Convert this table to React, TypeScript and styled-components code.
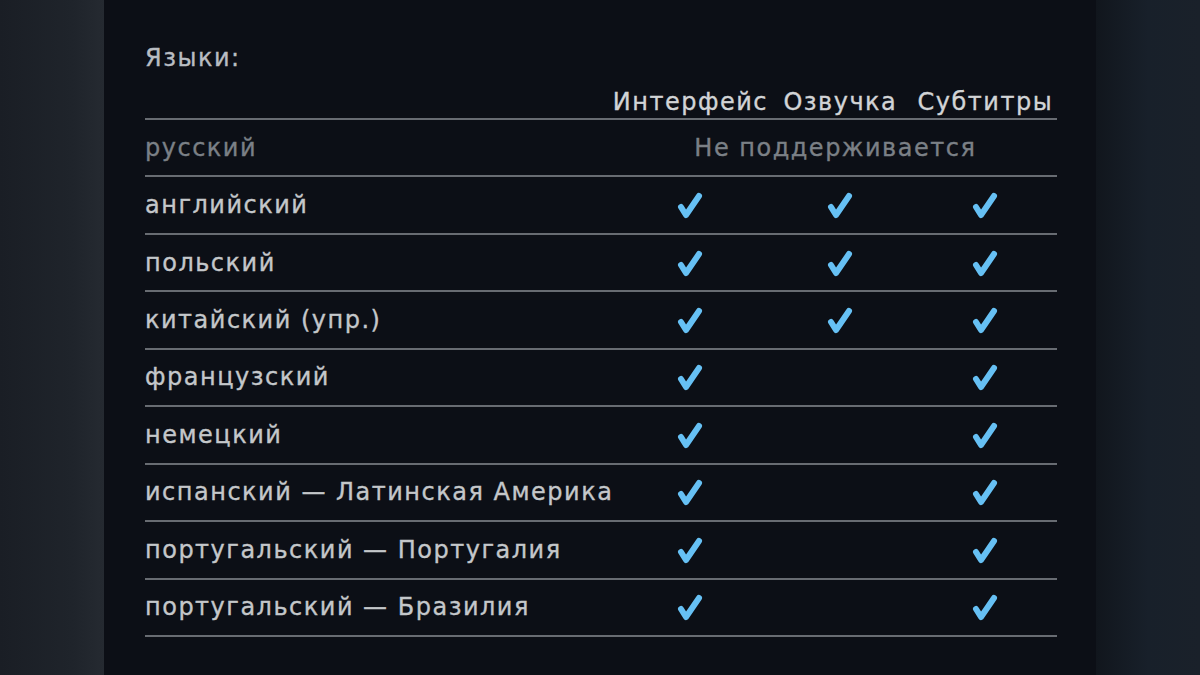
import { createGlobalStyle } from 'styled-components';
import styled from 'styled-components';

const GlobalStyle = createGlobalStyle`
  html, body {
    margin: 0;
    padding: 0;
    background: #0c0f16;
  }
  body {
    font-family: 'DejaVu Sans', 'Liberation Sans', Arial, sans-serif;
    letter-spacing: 1.5px;
    -webkit-text-stroke: 0.35px currentColor;
  }
`;

const Page = styled.div`
  display: flex;
  width: 1200px;
  height: 675px;
  overflow: hidden;
`;

const Side = styled.div<{ $right?: boolean }>`
  width: 104px;
  flex-shrink: 0;
  background: ${(p) =>
    p.$right
      ? 'linear-gradient(90deg, #11161d 0%, #18202a 50%, #1a212a 100%)'
      : 'linear-gradient(90deg, #1a1e25 0%, #1f242b 70%, #252a31 100%)'};
`;

const Panel = styled.div`
  flex: 1;
  background: #0c0f16;
  padding: 40px 39px 0 41px;
`;

const Title = styled.div`
  color: #b9bdc2;
  font-size: 24px;
  line-height: 36px;
  height: 36px;
`;

const Grid = styled.div`
  display: grid;
  grid-template-columns: 1fr 154px 146px 144px;
  margin-top: 6px;
`;

const Head = styled.div`
  height: 36px;
  line-height: 40px;
  border-bottom: 2px solid #686c72;
  color: #d2d4d6;
  font-size: 24px;
  text-align: center;
  white-space: nowrap;
  display: flex;
  justify-content: center;
`;

const Cell = styled.div<{ $span?: number; $muted?: boolean; $left?: boolean }>`
  grid-column: span ${(p) => p.$span ?? 1};
  height: 57.44px;
  box-sizing: border-box;
  border-bottom: 2px solid #686c72;
  display: flex;
  align-items: center;
  justify-content: ${(p) => (p.$left ? 'flex-start' : 'center')};
  color: ${(p) => (p.$muted ? '#7b8086' : '#c4c7ca')};
  font-size: 24px;
  white-space: nowrap;
`;

const Check = () => (
  <svg width="26" height="28" viewBox="0 0 26 28" style={{ marginTop: 2 }}>
    <path
      d="M4 15 L9 23 L22 4"
      fill="none"
      stroke="#66c0f4"
      strokeWidth="6"
      strokeLinecap="round"
      strokeLinejoin="round"
    />
  </svg>
);

type Lang = { name: string; ui: boolean; voice: boolean; subs: boolean };

const langs: Lang[] = [
  { name: 'английский', ui: true, voice: true, subs: true },
  { name: 'польский', ui: true, voice: true, subs: true },
  { name: 'китайский (упр.)', ui: true, voice: true, subs: true },
  { name: 'французский', ui: true, voice: false, subs: true },
  { name: 'немецкий', ui: true, voice: false, subs: true },
  { name: 'испанский — Латинская Америка', ui: true, voice: false, subs: true },
  { name: 'португальский — Португалия', ui: true, voice: false, subs: true },
  { name: 'португальский — Бразилия', ui: true, voice: false, subs: true },
];

export default function App() {
  return (
    <>
      <GlobalStyle />
      <Page>
        <Side />
        <Panel>
          <Title>Языки:</Title>
          <Grid>
            <Head />
            <Head>Интерфейс</Head>
            <Head>Озвучка</Head>
            <Head>Субтитры</Head>

            <Cell $left $muted>русский</Cell>
            <Cell $span={3} $muted>Не поддерживается</Cell>

            {langs.map((l) => (
              <>
                <Cell key={l.name} $left>{l.name}</Cell>
                <Cell>{l.ui && <Check />}</Cell>
                <Cell>{l.voice && <Check />}</Cell>
                <Cell>{l.subs && <Check />}</Cell>
              </>
            ))}
          </Grid>
        </Panel>
        <Side $right />
      </Page>
    </>
  );
}
